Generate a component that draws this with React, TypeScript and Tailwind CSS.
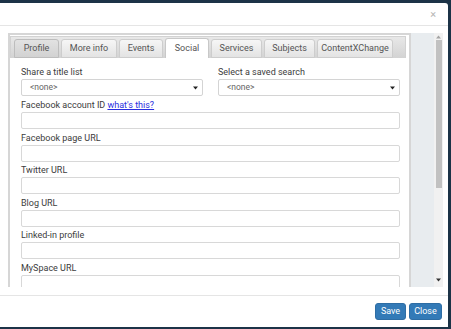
import React from "react";

const tabs = [
  { label: "Profile", cls: "w-[45px] bg-gradient-to-b from-[#e2e2e2] to-[#d2d2d2] border-[#bdbdbd] h-[19px]" },
  { label: "More info", cls: "w-[56px] bg-gradient-to-b from-[#f6f6f6] to-[#e3e3e3] border-[#cdcdcd] h-[19px]" },
  { label: "Events", cls: "w-[44px] bg-gradient-to-b from-[#f6f6f6] to-[#e3e3e3] border-[#cdcdcd] h-[19px]" },
  { label: "Social", cls: "w-[44px] bg-white border-[#c8c8c8] border-b-0 h-[20px] text-[#222]" },
  { label: "Services", cls: "w-[51px] bg-gradient-to-b from-[#f6f6f6] to-[#e3e3e3] border-[#cdcdcd] h-[19px]" },
  { label: "Subjects", cls: "w-[51px] bg-gradient-to-b from-[#f6f6f6] to-[#e3e3e3] border-[#cdcdcd] h-[19px]" },
  { label: "ContentXChange", cls: "w-[76px] bg-gradient-to-b from-[#f6f6f6] to-[#e3e3e3] border-[#cdcdcd] h-[19px]" },
];

const fields = ["Facebook page URL", "Twitter URL", "Blog URL", "Linked-in profile", "MySpace URL"];

const Caret = () => (
  <svg width="5" height="4" viewBox="0 0 5 4" className="shrink-0">
    <path d="M0 0.5 H5 L2.5 3.5 Z" fill="#222" />
  </svg>
);

const Select = () => (
  <div className="h-[17px] border border-[#d4d4d4] rounded-[2px] flex items-center justify-between pl-[8px] pr-[4px] text-[8.5px] text-[#666]">
    <span>&lt;none&gt;</span>
    <Caret />
  </div>
);

const Input = () => <div className="h-[17px] border border-[#d8d8d8] rounded-[2px] bg-white" />;

export default function App() {
  return (
    <div className="w-[451px] h-[329px] bg-[#1c3347] pt-[3px] pr-[3px] overflow-hidden font-['Roboto',sans-serif]">
      <div className="w-[448px] h-[324px] bg-white flex flex-col rounded-tr-[3px]">
        {/* header */}
        <div className="h-[23px] border-b border-[#e5e5e5] flex items-center justify-end pr-[12px]">
          <span className="text-[11px] leading-none text-[#b5b5b5]">×</span>
        </div>

        {/* body */}
        <div className="h-[269px] pt-[7px] pl-[8px] pr-[5px]">
          <div className="h-[254px] w-[435px] flex bg-[#e8ecef]">
            <div className="w-[403px] h-full bg-white border-2 border-b-0 border-[#d6d6d6] overflow-hidden pr-[3px]">
              <div className="mt-[1px] h-[22px] bg-gradient-to-b from-[#e8e8e8] to-[#d3d3d3] border border-b-0 border-[#d2d2d2] pl-[3px] flex items-end gap-[2px]">
                {tabs.map((t) => (
                  <div
                    key={t.label}
                    className={`${t.cls} border rounded-t-[3px] flex items-center justify-center text-[9px] text-[#555] shrink-0`}
                  >
                    {t.label}
                  </div>
                ))}
              </div>

              <div className="pt-[8px] pl-[11px] pr-[6px] text-[9px] text-[#3c3c3c]">
                <div className="grid grid-cols-2 gap-x-[15px]">
                  <div>
                    <div className="h-[12px] leading-[12px] mb-[1px]">Share a title list</div>
                    <Select />
                  </div>
                  <div>
                    <div className="h-[12px] leading-[12px] mb-[1px]">Select a saved search</div>
                    <Select />
                  </div>
                </div>

                <div className="mt-[3px] flex flex-col gap-[2.6px]">
                  <div>
                    <div className="h-[12px] leading-[12px] mb-[1px]">
                      Facebook account ID{" "}
                      <a className="text-[#2a2ee0] underline">what's this?</a>
                    </div>
                    <Input />
                  </div>
                  {fields.map((f) => (
                    <div key={f}>
                      <div className="h-[12px] leading-[12px] mb-[1px]">{f}</div>
                      <Input />
                    </div>
                  ))}
                </div>
              </div>
            </div>

            <div className="flex-1" />

            {/* scrollbar */}
            <div className="w-[9px] h-full bg-[#f1f1f1] flex flex-col items-center">
              <svg width="5" height="4" viewBox="0 0 5 4" className="mt-[2px]">
                <path d="M0 3.5 H5 L2.5 0.5 Z" fill="#a3a3a3" />
              </svg>
              <div className="mt-[1px] w-[6px] h-[148px] bg-[#c1c1c1]" />
              <div className="flex-1" />
              <svg width="5" height="4" viewBox="0 0 5 4" className="mb-[5px]">
                <path d="M0 0.5 H5 L2.5 3.5 Z" fill="#333" />
              </svg>
            </div>
          </div>
        </div>

        {/* footer */}
        <div className="h-[32px] border-t border-[#e5e5e5] flex justify-end items-start pt-[7px] pr-[6px] gap-[3px]">
          <button className="w-[31px] h-[17px] bg-[#337ab7] border border-[#2e6da4] rounded-[3px] text-white text-[9px] leading-none">
            Save
          </button>
          <button className="w-[33px] h-[17px] bg-[#337ab7] border border-[#2e6da4] rounded-[3px] text-white text-[9px] leading-none">
            Close
          </button>
        </div>
      </div>
    </div>
  );
}
